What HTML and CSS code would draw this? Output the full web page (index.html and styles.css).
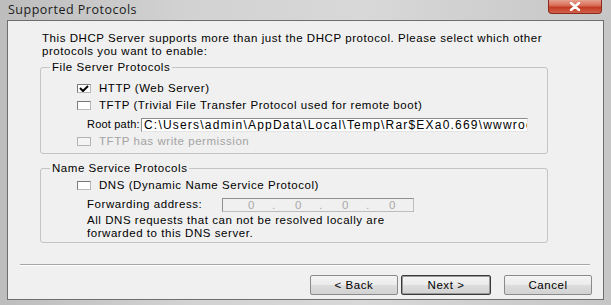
FILE: index.html
```html
<!DOCTYPE html>
<html>
<head>
<meta charset="utf-8">
<link rel="stylesheet" href="styles.css">
</head>
<body>
<div class="window">
  <div class="titlebar">
    <span class="title">Supported Protocols</span>
    <div class="close">
      <svg width="16" height="9" viewBox="0 0 16 9"><path d="M4 1 L12 8 M12 1 L4 8" stroke="#fff" stroke-width="2.4" stroke-linecap="round"/></svg>
    </div>
  </div>
  <div class="frame">
    <div class="client">
      <p class="intro">This DHCP Server supports more than just the DHCP protocol. Please select which other<br>protocols you want to enable:</p>

      <fieldset class="group g1">
        <legend>File Server Protocols</legend>
        <div class="row r1"><span class="cb checked"><svg width="10" height="7" viewBox="0 0 10 7"><path d="M1 3 L4 6 L9 1" stroke="#000" stroke-width="2" fill="none"/></svg></span><span>HTTP (Web Server)</span></div>
        <div class="row r2"><span class="cb"></span><span>TFTP (Trivial File Transfer Protocol used for remote boot)</span></div>
        <div class="row r3 sub"><span class="label">Root path:</span><div class="input">C:\Users\admin\AppData\Local\Temp\Rar$EXa0.669\wwwroot</div></div>
        <div class="row r4 disabled"><span class="cb"></span><span>TFTP has write permission</span></div>
      </fieldset>

      <fieldset class="group g2">
        <legend>Name Service Protocols</legend>
        <div class="row r5"><span class="cb"></span><span>DNS (Dynamic Name Service Protocol)</span></div>
        <div class="row r6 sub"><span class="label wide">Forwarding address:</span><div class="ip"><span>0</span><span class="dot">.</span><span>0</span><span class="dot">.</span><span>0</span><span class="dot">.</span><span>0</span></div></div>
        <p class="desc">All DNS requests that can not be resolved locally are<br>forwarded to this DNS server.</p>
      </fieldset>

      <div class="sep"></div>
      <div class="buttons">
        <div class="btn">&lt; Back</div>
        <div class="btn default">Next &gt;</div>
        <div class="btn cancel">Cancel</div>
      </div>
    </div>
  </div>
</div>
</body>
</html>
```
FILE: styles.css
```css
html, body {
  margin: 0;
  padding: 0;
}
body {
  width: 611px;
  height: 305px;
  overflow: hidden;
  font-family: "Liberation Sans", Arial, sans-serif;
  font-size: 11.5px;
  letter-spacing: 0.55px;
  color: #000;
}
.window {
  width: 611px;
  height: 305px;
  display: flex;
  flex-direction: column;
  background: linear-gradient(90deg, #bdbdbd 0%, #d2d2d2 30%, #d8d8d8 60%, #c6c6c6 100%);
}
.titlebar {
  height: 20px;
  display: flex;
  align-items: flex-start;
  padding-left: 8px;
  box-sizing: border-box;
}
.title {
  font-family: "Open Sans", "Noto Sans", sans-serif;
  font-size: 12.5px;
  line-height: 19px;
  color: #1b1b1b;
  letter-spacing: 0.5px;
}
.close {
  margin-left: auto;
  margin-right: 9px;
  width: 54px;
  height: 14px;
  box-sizing: border-box;
  border: 1px solid #8a2a1e;
  border-top: none;
  border-radius: 0 0 4px 4px;
  background: linear-gradient(180deg, #e7a08f 0%, #d66a55 45%, #c23b22 55%, #d0604a 100%);
  display: flex;
  align-items: center;
  justify-content: center;
}
.frame {
  flex: 1;
  padding: 0 7px 5px 7px;
  display: flex;
}
.client {
  flex: 1;
  border: 1px solid #6e6e6e;
  background: #f0f0f0;
  display: flex;
  flex-direction: column;
}
.intro {
  margin: 11px 0 0 34px;
  line-height: 13.3px;
  white-space: nowrap;
}
.group {
  margin: 0 0 0 32px;
  width: 508px;
  box-sizing: border-box;
  border: 1px solid #c4c4c4;
  border-radius: 3px;
  padding: 0;
  min-width: 0;
}
.group legend {
  margin-left: 9px;
  padding: 0 2px;
  line-height: 13px;
}
.g1 {
  margin-top: 2px;
  padding: 7px 0 4px 0;
}
.g2 {
  margin-top: 8px;
  padding: 1px 0 2px 0;
}
.row {
  display: flex;
  align-items: center;
  padding-left: 36px;
  line-height: 13px;
  white-space: nowrap;
}
.row.sub {
  padding-left: 46px;
}
.r1 { height: 16px; }
.r2 { height: 18px; }
.r3 { height: 20px; }
.r4 { height: 14px; }
.r5 { height: 20px; }
.r6 { height: 18px; }
.cb {
  width: 14px;
  height: 9px;
  box-sizing: border-box;
  border: 1px solid #7a7a7a;
  border-right-color: #b8b8b8;
  border-bottom-color: #b8b8b8;
  background: #fff;
  margin-right: 8px;
  display: flex;
  align-items: center;
  justify-content: center;
  flex: none;
}
.cb svg { display: block; }
.disabled { color: #a3a3a3; }
.disabled .cb {
  background: #f4f4f4;
  border-color: #b4b4b4;
}
.label {
  width: 54px;
  flex: none;
}
.r3 .label {
  font-size: 11px;
  letter-spacing: 0.2px;
}
.label.wide { width: 135px; }
.input {
  width: 387px;
  height: 14px;
  box-sizing: border-box;
  border: 1px solid #8c8c8c;
  border-right-color: #e4e4e4;
  border-bottom-color: #e4e4e4;
  background: #fff;
  overflow: hidden;
  white-space: nowrap;
  padding-left: 2px;
  font-size: 12px;
  line-height: 12px;
  letter-spacing: 1.2px;
}
.ip {
  width: 192px;
  height: 14px;
  box-sizing: border-box;
  border: 1px solid #bdbdbd;
  border-top-color: #8f8f8f;
  border-left-color: #8f8f8f;
  background: #f0f0f0;
  color: #a8a8a8;
  display: flex;
  align-items: center;
  padding-left: 25px;
  line-height: 12px;
}
.ip span { width: 24px; }
.ip .dot { width: 23px; }
.desc {
  margin: 0 0 0 46px;
  line-height: 13.3px;
  white-space: nowrap;
}
.sep {
  margin: 21px 0 0 12px;
  width: 570px;
  border-top: 1px solid #a6a6a6;
  border-bottom: 1px solid #ffffff;
}
.buttons {
  margin-top: 9px;
  display: flex;
  justify-content: flex-end;
  padding-right: 11px;
  gap: 3px;
}
.btn {
  width: 88px;
  height: 20px;
  box-sizing: border-box;
  border: 1px solid #8a8a8a;
  border-radius: 2px;
  background: linear-gradient(180deg, #f4f4f4 0%, #ebebeb 50%, #dddddd 51%, #d2d2d2 100%);
  display: flex;
  align-items: center;
  justify-content: center;
  line-height: 13px;
}
.btn.default {
  border: 1px solid #3a3a3a;
  box-shadow: inset 1px 1px 0 #9a9a9a, inset -1px -1px 0 #9a9a9a;
  width: 90px;
}
.btn.cancel {
  margin-left: 10px;
}
```
